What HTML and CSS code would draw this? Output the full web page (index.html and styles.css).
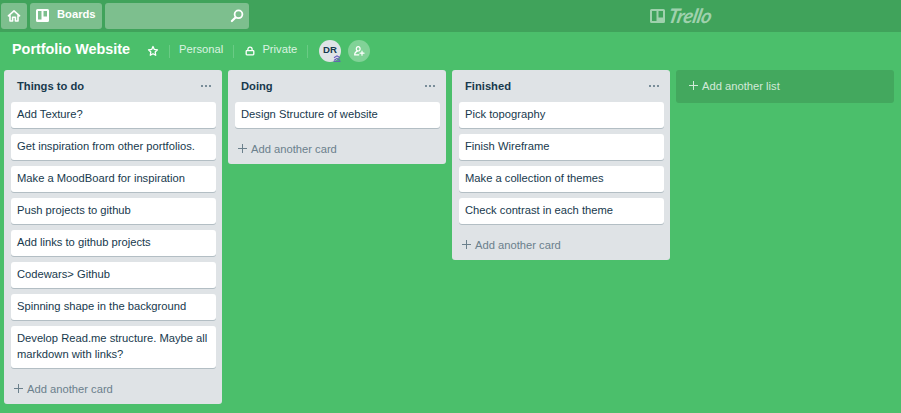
FILE: index.html
```html
<!DOCTYPE html>
<html lang="en">
<head>
<meta charset="utf-8">
<title>Portfolio Website | Trello</title>
<link rel="stylesheet" href="styles.css">
</head>
<body>
<header class="topbar">
  <div class="nav">
    <a class="nav-btn home"><svg width="14" height="14" viewBox="0 0 14 14" fill="none" stroke="#fff" stroke-width="1.6" stroke-linejoin="round" stroke-linecap="round"><path d="M1.4 6.8 7 1.8l5.600 5M3 6.500V12h2.600V8.200h2.800V12H11V6.500"/></svg></a>
    <a class="nav-btn boards"><svg width="13" height="13" viewBox="0 0 13 13"><path fill="#fff" fill-rule="evenodd" d="M1.500 0h10A1.500 1.500 0 0 1 13 1.500v10a1.500 1.500 0 0 1-1.500 1.500h-10A1.500 1.500 0 0 1 0 11.500v-10A1.500 1.500 0 0 1 1.500 0ZM2 2v8.500h3.500V2ZM7.500 2v5.500H11V2Z"/></svg><span>Boards</span></a>
    <div class="search"><svg width="14" height="14" viewBox="0 0 14 14" fill="none" stroke="#fff" stroke-width="1.800" stroke-linecap="round"><circle cx="8.500" cy="5.300" r="3.900"/><path d="M5.500 8.500 1.900 12" stroke-width="2.200"/></svg></div>
  </div>
  <a class="logo"><svg width="15" height="14" viewBox="0 0 15 14"><path fill="currentColor" fill-rule="evenodd" d="M1.500 0h12A1.500 1.500 0 0 1 15 1.500v11a1.500 1.500 0 0 1-1.500 1.500h-12A1.500 1.500 0 0 1 0 12.500v-11A1.500 1.500 0 0 1 1.500 0ZM2 2v10h4.500V2ZM8.500 2v6.500H13V2Z"/></svg><span>Trello</span></a>
</header>
<div class="board-header">
  <h1>Portfolio Website</h1>
  <svg class="star" width="12" height="12" viewBox="0 0 12 12" fill="none" stroke="#fff" stroke-width="1.300" stroke-linejoin="round"><path d="m6 1.500 1.300 2.900 3.200.4-2.300 2.200.5 3.300L6 8.800l-2.700 1.500.5-3.300-2.300-2.200 3.200-.4Z"/></svg>
  <i class="divider d1"></i>
  <span class="meta personal">Personal</span>
  <i class="divider d2"></i>
  <svg class="lock" width="10" height="10" viewBox="0 0 10 10" fill="none" stroke="#fff" stroke-width="1.300"><rect x="1.200" y="4.600" width="7.600" height="4.200" rx=".7"/><path d="M2.900 4.300V3.300a2.100 2.100 0 0 1 4.200 0v1"/></svg>
  <span class="meta private">Private</span>
  <i class="divider d3"></i>
  <div class="avatar">DR<svg class="badge" width="8" height="7" viewBox="0 0 8 7" fill="none" stroke="#6554c0" stroke-width="1.100"><path d="M1 2.800 4 .9l3 1.900M1.300 5.200 4 3.400l2.700 1.800M.5 6.300h7"/></svg></div>
  <div class="invite"><svg width="12" height="12" viewBox="0 0 12 12" fill="none" stroke="#fff" stroke-width="1.200" stroke-linecap="round"><ellipse cx="5.200" cy="3.800" rx="1.900" ry="2.200"/><path d="M5.800 9.800H1.700c0-1.900.8-3 2.500-3.700M9 6.200v4M7 8.200h4"/></svg></div>
</div>
<main class="board">
  <section class="list">
    <div class="list-head"><h2>Things to do</h2><span class="dots"><i></i><i></i><i></i></span></div>
    <div class="cards">
      <div class="card">Add Texture?</div>
      <div class="card">Get inspiration from other portfolios.</div>
      <div class="card">Make a MoodBoard for inspiration</div>
      <div class="card">Push projects to github</div>
      <div class="card">Add links to github projects</div>
      <div class="card">Codewars&gt; Github</div>
      <div class="card">Spinning shape in the background</div>
      <div class="card">Develop Read.me structure. Maybe all markdown with links?</div>
    </div>
    <a class="add"><i class="plus"></i>Add another card</a>
  </section>
  <section class="list">
    <div class="list-head"><h2>Doing</h2><span class="dots"><i></i><i></i><i></i></span></div>
    <div class="cards">
      <div class="card">Design Structure of website</div>
    </div>
    <a class="add"><i class="plus"></i>Add another card</a>
  </section>
  <section class="list">
    <div class="list-head"><h2>Finished</h2><span class="dots"><i></i><i></i><i></i></span></div>
    <div class="cards">
      <div class="card">Pick topography</div>
      <div class="card">Finish Wireframe</div>
      <div class="card">Make a collection of themes</div>
      <div class="card">Check contrast in each theme</div>
    </div>
    <a class="add"><i class="plus"></i>Add another card</a>
  </section>
  <a class="add-list"><i class="plus"></i>Add another list</a>
</main>
</body>
</html>
```
FILE: styles.css
```css
* { box-sizing: border-box; }
body {
  margin: 0;
  height: 413px;
  overflow: hidden;
  background: #4bbf6b;
  color: #17394d;
  font: 11.2px/16px "Liberation Sans", Arial, sans-serif;
}
h1, h2 { margin: 0; }
svg { display: block; flex: none; }

.topbar {
  display: flex;
  height: 32px;
  padding: 3px 0 0 1px;
  background: #40a35b;
}
.nav { display: flex; gap: 3px; width: 649px; }
.nav-btn, .search {
  display: flex;
  align-items: center;
  height: 26px;
  border-radius: 3px;
  background: #7dbf8e;
}
.home { width: 26px; justify-content: center; }
.boards {
  width: 72px;
  padding-left: 6px;
  gap: 8px;
  color: #fff;
  font-weight: bold;
}
.boards svg { margin-top: -1px; }
.boards span { padding-bottom: 4px; }
.search { width: 144px; justify-content: flex-end; padding-right: 5px; }
.search svg { margin-top: -1px; }
.home svg { margin-top: -1px; }
.logo { display: flex; padding-top: 6px; gap: 3px; color: #9fd1ad; }
.logo span {
  margin-top: -4px;
  font: italic bold 20px/20px Lato, sans-serif;
  letter-spacing: -0.5px;
  transform: skewX(-12deg);
}

.board-header {
  display: flex;
  align-items: center;
  height: 38px;
  padding-left: 12px;
}
h1 {
  width: 135px;
  color: #fff;
  font-size: 14.4px;
  line-height: 20px;
  padding-bottom: 5px;
}
.divider { width: 1px; height: 13px; background: #6acb85; }
.d1 { margin-left: 10px; }
.d2 { margin-left: 10px; }
.d3 { margin-left: 10px; }
.meta { color: #dbf3e1; padding-bottom: 5px; }
.personal { width: 44px; margin-left: 9px; }
.lock { margin-left: 11px; }
.private { width: 34.6px; margin-left: 7.4px; }
.avatar, .invite {
  position: relative;
  width: 22px;
  height: 22px;
  border-radius: 50%;
}
.avatar {
  margin-left: 11px;
  background: #dfe3e6;
  font: bold 9.6px/20px "Liberation Sans", Arial, sans-serif;
  text-align: center;
}
.badge { position: absolute; right: 0; bottom: 0; }
.invite {
  display: flex;
  align-items: center;
  justify-content: center;
  margin-left: 7px;
  background: #81d297;
}

.board { display: flex; align-items: flex-start; gap: 6px; padding-left: 4px; }
.list { width: 218px; border-radius: 3px; background: #dfe3e6; }
.list-head {
  display: flex;
  justify-content: space-between;
  height: 32px;
  padding: 8px 11px 0 13px;
}
h2 { font-size: 11.2px; line-height: 16px; }
.dots { display: flex; gap: 2px; padding-top: 7px; }
.dots i { width: 2px; height: 2px; background: #798d99; }
.cards { display: flex; flex-direction: column; gap: 6px; padding: 0 6px 0 7px; }
.card {
  padding: 4px 5px 6px 6px;
  border-radius: 3px;
  background: #fff;
  box-shadow: 0 1px 0 #b3bec4;
}
.add {
  display: flex;
  height: 36px;
  padding: 13px 0 0 10px;
  color: #6b808c;
}
.plus {
  width: 9px;
  height: 9px;
  margin: 3px 4px 0 0;
  background:
    linear-gradient(currentColor, currentColor) 50% 50% / 9px 1px no-repeat,
    linear-gradient(currentColor, currentColor) 50% 50% / 1px 9px no-repeat;
}
.add-list {
  display: flex;
  width: 218px;
  height: 33px;
  padding: 8px 0 0 13px;
  border-radius: 3px;
  background: #43a85e;
  color: #d3ead9;
}
```
